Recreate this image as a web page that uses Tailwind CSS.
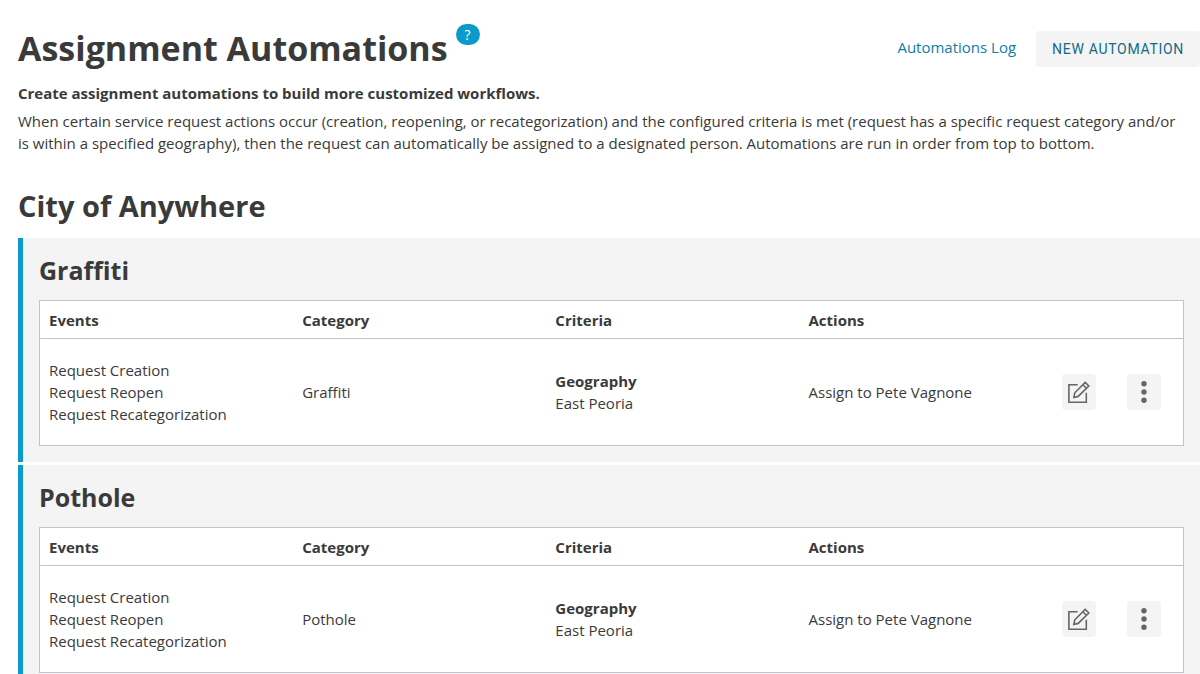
<!DOCTYPE html>
<html lang="en">
<head>
  <meta charset="UTF-8">
  <meta name="viewport" content="width=device-width, initial-scale=1.0">
  <title>Assignment Automations</title>
  <script src="https://cdn.jsdelivr.net/npm/@tailwindcss/browser@4"></script>
</head>
<body class="bg-white text-[#3a3a3a] font-['Open_Sans',sans-serif] text-[15px] leading-[22px]">

  <main class="pl-[18px]">

    <!-- Header -->
    <header class="flex justify-between items-start pt-6">
      <div class="flex items-start gap-2">
        <h1 class="text-[34px] leading-[48px] font-bold">Assignment Automations</h1>
        <button type="button" aria-label="Help" class="w-6 h-[21px] rounded-full bg-[#0b9acb] text-white text-sm leading-[21px]">?</button>
      </div>
      <div class="flex items-start gap-5 pt-[7px]">
        <a href="#" class="pt-[5px] text-[#0f7ea5]">Automations Log</a>
        <button type="button" class="h-9 px-4 rounded bg-[#f4f4f4] text-[#0f6a8b] font-['Roboto',sans-serif] text-sm tracking-wider">NEW AUTOMATION</button>
      </div>
    </header>

    <!-- Intro -->
    <p class="mt-[10px] font-bold">Create assignment automations to build more customized workflows.</p>
    <p class="mt-[6px] pr-3">When certain service request actions occur (creation, reopening, or recategorization) and the configured criteria is met (request has a specific request category and/or is within a specified geography), then the request can automatically be assigned to a designated person. Automations are run in order from top to bottom.</p>

    <h2 class="mt-8 mb-3 text-[29px] leading-[40px] font-bold">City of Anywhere</h2>

    <!-- Graffiti -->
    <section class="border-l-[5px] border-[#0b9acb] bg-[#f4f4f4] p-4 mb-[3px]">
      <h3 class="text-[25px] leading-[32px] font-bold mb-[14px]">Graffiti</h3>
      <table class="w-full table-fixed border-separate border-spacing-0 border border-[#c3c3cf] bg-white text-left">
        <thead>
          <tr class="h-[38px]">
            <th class="w-[22.15%] px-[9px] border-b border-[#c3c3cf] font-bold">Events</th>
            <th class="w-[22.15%] px-[9px] border-b border-[#c3c3cf] font-bold">Category</th>
            <th class="w-[22.15%] px-[9px] border-b border-[#c3c3cf] font-bold">Criteria</th>
            <th class="w-[22.15%] px-[9px] border-b border-[#c3c3cf] font-bold">Actions</th>
            <th class="px-[9px] border-b border-[#c3c3cf]"></th>
            <th class="px-[9px] border-b border-[#c3c3cf]"></th>
          </tr>
        </thead>
        <tbody>
          <tr class="h-[106px]">
            <td class="px-[9px]">
              <ul>
                <li>Request Creation</li>
                <li>Request Reopen</li>
                <li>Request Recategorization</li>
              </ul>
            </td>
            <td class="px-[9px]">Graffiti</td>
            <td class="px-[9px]">
              <p class="font-bold">Geography</p>
              <p>East Peoria</p>
            </td>
            <td class="px-[9px]">Assign to Pete Vagnone</td>
            <td class="px-[9px]">
              <button type="button" aria-label="Edit" class="flex items-center justify-center w-[34px] h-9 rounded bg-[#f4f4f4]">
                <svg class="w-6 h-6" viewBox="0 0 24 24" fill="none" stroke="#666" stroke-width="1.6">
                  <path d="M10.7 4.8H1.9v17.4h17.4V12.7" />
                  <path d="M18.2 2.4l3.6 3.6-10.6 10.4-4.4 1 1-4.6zM15.8 4.7l3.6 3.6" />
                </svg>
              </button>
            </td>
            <td class="px-[9px]">
              <button type="button" aria-label="More" class="flex items-center justify-center w-[34px] h-9 rounded bg-[#f4f4f4]">
                <svg class="w-6 h-6" viewBox="0 0 24 24" fill="#666">
                  <circle cx="12" cy="3.7" r="2.7" />
                  <circle cx="12" cy="12" r="2.7" />
                  <circle cx="12" cy="20.3" r="2.7" />
                </svg>
              </button>
            </td>
          </tr>
        </tbody>
      </table>
    </section>

    <!-- Pothole -->
    <section class="border-l-[5px] border-[#0b9acb] bg-[#f4f4f4] p-4 mb-[3px]">
      <h3 class="text-[25px] leading-[32px] font-bold mb-[14px]">Pothole</h3>
      <table class="w-full table-fixed border-separate border-spacing-0 border border-[#c3c3cf] bg-white text-left">
        <thead>
          <tr class="h-[38px]">
            <th class="w-[22.15%] px-[9px] border-b border-[#c3c3cf] font-bold">Events</th>
            <th class="w-[22.15%] px-[9px] border-b border-[#c3c3cf] font-bold">Category</th>
            <th class="w-[22.15%] px-[9px] border-b border-[#c3c3cf] font-bold">Criteria</th>
            <th class="w-[22.15%] px-[9px] border-b border-[#c3c3cf] font-bold">Actions</th>
            <th class="px-[9px] border-b border-[#c3c3cf]"></th>
            <th class="px-[9px] border-b border-[#c3c3cf]"></th>
          </tr>
        </thead>
        <tbody>
          <tr class="h-[106px]">
            <td class="px-[9px]">
              <ul>
                <li>Request Creation</li>
                <li>Request Reopen</li>
                <li>Request Recategorization</li>
              </ul>
            </td>
            <td class="px-[9px]">Pothole</td>
            <td class="px-[9px]">
              <p class="font-bold">Geography</p>
              <p>East Peoria</p>
            </td>
            <td class="px-[9px]">Assign to Pete Vagnone</td>
            <td class="px-[9px]">
              <button type="button" aria-label="Edit" class="flex items-center justify-center w-[34px] h-9 rounded bg-[#f4f4f4]">
                <svg class="w-6 h-6" viewBox="0 0 24 24" fill="none" stroke="#666" stroke-width="1.6">
                  <path d="M10.7 4.8H1.9v17.4h17.4V12.7" />
                  <path d="M18.2 2.4l3.6 3.6-10.6 10.4-4.4 1 1-4.6zM15.8 4.7l3.6 3.6" />
                </svg>
              </button>
            </td>
            <td class="px-[9px]">
              <button type="button" aria-label="More" class="flex items-center justify-center w-[34px] h-9 rounded bg-[#f4f4f4]">
                <svg class="w-6 h-6" viewBox="0 0 24 24" fill="#666">
                  <circle cx="12" cy="3.7" r="2.7" />
                  <circle cx="12" cy="12" r="2.7" />
                  <circle cx="12" cy="20.3" r="2.7" />
                </svg>
              </button>
            </td>
          </tr>
        </tbody>
      </table>
    </section>

  </main>

</body>
</html>
